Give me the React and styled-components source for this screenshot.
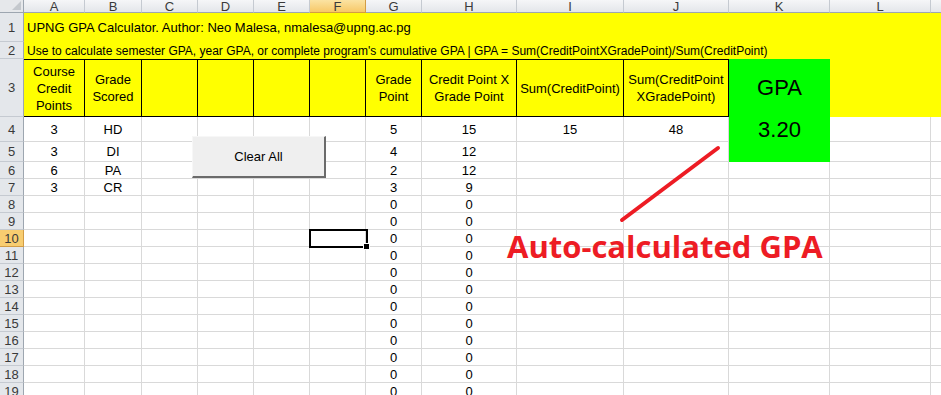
import styled, { createGlobalStyle } from "styled-components";

const GlobalStyle = createGlobalStyle`
  html, body {
    margin: 0;
    padding: 0;
    background: #fff;
    overflow: hidden;
  }
  body {
    font-family: "Liberation Sans", Arial, sans-serif;
    color: #000;
  }
`;

const COLS = ["A", "B", "C", "D", "E", "F", "G", "H", "I", "J", "K", "L", "M"];
const WIDTHS = [61, 57, 56, 56, 56, 56, 56, 95, 107, 105, 101, 101, 60];
const HEADERS = {
  A: "Course Credit Points",
  B: "Grade Scored",
  G: "Grade Point",
  H: "Credit Point X Grade Point",
  I: "Sum(CreditPoint)",
  J: "Sum(CreditPoint XGradePoint)",
};

// data rows 4..19
const DATA = {
  4: { A: "3", B: "HD", G: "5", H: "15", I: "15", J: "48" },
  5: { A: "3", B: "DI", G: "4", H: "12" },
  6: { A: "6", B: "PA", G: "2", H: "12" },
  7: { A: "3", B: "CR", G: "3", H: "9" },
};
for (let r = 8; r <= 19; r++) DATA[r] = { G: "0", H: "0" };

const ACTIVE_COL = "F";
const ACTIVE_ROW = 10;

const Sheet = styled.div`
  position: relative;
  width: 941px;
  height: 395px;
  overflow: hidden;
  display: grid;
  grid-template-columns: 24px ${WIDTHS.map((w) => w + "px").join(" ")};
  grid-template-rows: 13px 29px 17px 58px 25px 20px repeat(14, 17px);
  font-size: 13px;
`;

const Corner = styled.div`
  background: #e6e8eb;
  border-right: 1px solid #9da6b0;
  border-bottom: 1px solid #9da6b0;
  position: relative;
  &::after {
    content: "";
    position: absolute;
    right: 2px;
    bottom: 2px;
    border-left: 9px solid transparent;
    border-bottom: 9px solid #c4c8cd;
  }
`;

const ColHead = styled.div`
  display: flex;
  align-items: center;
  justify-content: center;
  font-size: 13px;
  line-height: 13px;
  color: #3a3a3a;
  background: ${(p) =>
    p.$active
      ? "linear-gradient(#fbe3a2, #f7c868)"
      : "linear-gradient(#f5f6f8, #e3e6ea)"};
  border-right: 1px solid ${(p) => (p.$active ? "#d29c45" : "#c5cad1")};
  border-bottom: 1px solid ${(p) => (p.$active ? "#d29c45" : "#9da6b0")};
`;

const RowHead = styled.div`
  display: flex;
  align-items: center;
  justify-content: center;
  font-size: 13px;
  color: #3a3a3a;
  background: ${(p) => (p.$active ? "#f8cd70" : "#e4e7eb")};
  border-right: 1px solid ${(p) => (p.$active ? "#d29c45" : "#9da6b0")};
  border-bottom: 1px solid ${(p) => (p.$active ? "#d29c45" : "#c5cad1")};
`;

const Banner = styled.div`
  grid-column: span 13;
  background: #ffff00;
  display: flex;
  align-items: center;
  padding-left: 3px;
  white-space: nowrap;
  font-size: ${(p) => p.$size}px;
`;

const HeadCell = styled.div`
  background: #ffff00;
  border-top: 1px solid #000;
  border-bottom: 1px solid #000;
  border-right: 1px solid #000;
  display: flex;
  align-items: center;
  justify-content: center;
  text-align: center;
  line-height: 17px;
  padding: 0 2px;
  font-size: 13px;
`;

const FillCell = styled.div`
  background: ${(p) => p.$fill};
  grid-column: span ${(p) => p.$span || 1};
  display: flex;
  align-items: center;
  justify-content: center;
  font-size: ${(p) => p.$size || 13}px;
`;

const Cell = styled.div`
  border-right: 1px solid #d9d9d9;
  border-bottom: 1px solid #d9d9d9;
  display: flex;
  align-items: center;
  justify-content: center;
  font-size: 13px;
  white-space: nowrap;
`;

const ClearButton = styled.button`
  position: absolute;
  left: 192px;
  top: 136px;
  width: 134px;
  height: 42px;
  background: #efefef;
  border-top: 1px solid #f7f7f7;
  border-left: 1px solid #f7f7f7;
  border-right: 2px solid #6b6b6b;
  border-bottom: 2px solid #6b6b6b;
  font-family: "Liberation Sans", Arial, sans-serif;
  font-size: 13px;
  color: #000;
  padding: 0;
`;

const Selection = styled.div`
  position: absolute;
  left: 309px;
  top: 229px;
  width: 55px;
  height: 15px;
  border: 2px solid #000;
  &::after {
    content: "";
    position: absolute;
    right: -4px;
    bottom: -4px;
    width: 5px;
    height: 5px;
    background: #000;
    border: 1px solid #fff;
  }
`;

const Arrow = styled.svg`
  position: absolute;
  left: 0;
  top: 0;
  pointer-events: none;
`;

const Note = styled.div`
  position: absolute;
  left: 507px;
  top: 231px;
  font-family: "Open Sans", "Liberation Sans", sans-serif;
  font-weight: 700;
  font-size: 31px;
  line-height: 31px;
  color: #ed1c24;
  white-space: nowrap;
`;

const App = () => {
  const rows = [];
  for (let r = 4; r <= 19; r++) {
    const data = DATA[r] || {};
    rows.push(
      <RowHead key={"h" + r} $active={r === ACTIVE_ROW}>
        {r}
      </RowHead>
    );
    COLS.forEach((c) => {
      if (c === "K" && r === 4) {
        rows.push(
          <FillCell key={c + r} $fill="#00ff00" $size={22}>
            3.20
          </FillCell>
        );
      } else if (c === "K" && r === 5) {
        rows.push(<FillCell key={c + r} $fill="#00ff00" />);
      } else {
        rows.push(<Cell key={c + r}>{data[c]}</Cell>);
      }
    });
  }

  return (
    <>
      <GlobalStyle />
      <Sheet>
        <Corner />
        {COLS.map((c) => (
          <ColHead key={c} $active={c === ACTIVE_COL}>
            {c}
          </ColHead>
        ))}

        <RowHead>1</RowHead>
        <Banner $size={13}>
          UPNG GPA Calculator. Author: Neo Malesa, nmalesa@upng.ac.pg
        </Banner>
        <RowHead>2</RowHead>
        <Banner $size={12}>
          Use to calculate semester GPA, year GPA, or complete program's
          cumulative GPA | GPA = Sum(CreditPointXGradePoint)/Sum(CreditPoint)
        </Banner>

        <RowHead>3</RowHead>
        {COLS.slice(0, 10).map((c) => (
          <HeadCell key={c}>{HEADERS[c]}</HeadCell>
        ))}
        <FillCell $fill="#00ff00" $size={22}>
          GPA
        </FillCell>
        <FillCell $fill="#ffff00" $span={2} />

        {rows}

        <ClearButton>Clear All</ClearButton>
        <Selection />
        <Arrow width="941" height="395">
          <line
            x1="622"
            y1="220"
            x2="718"
            y2="148"
            stroke="#ed1c24"
            strokeWidth="4"
            strokeLinecap="round"
          />
        </Arrow>
        <Note>Auto-calculated GPA</Note>
      </Sheet>
    </>
  );
};

export default App;
